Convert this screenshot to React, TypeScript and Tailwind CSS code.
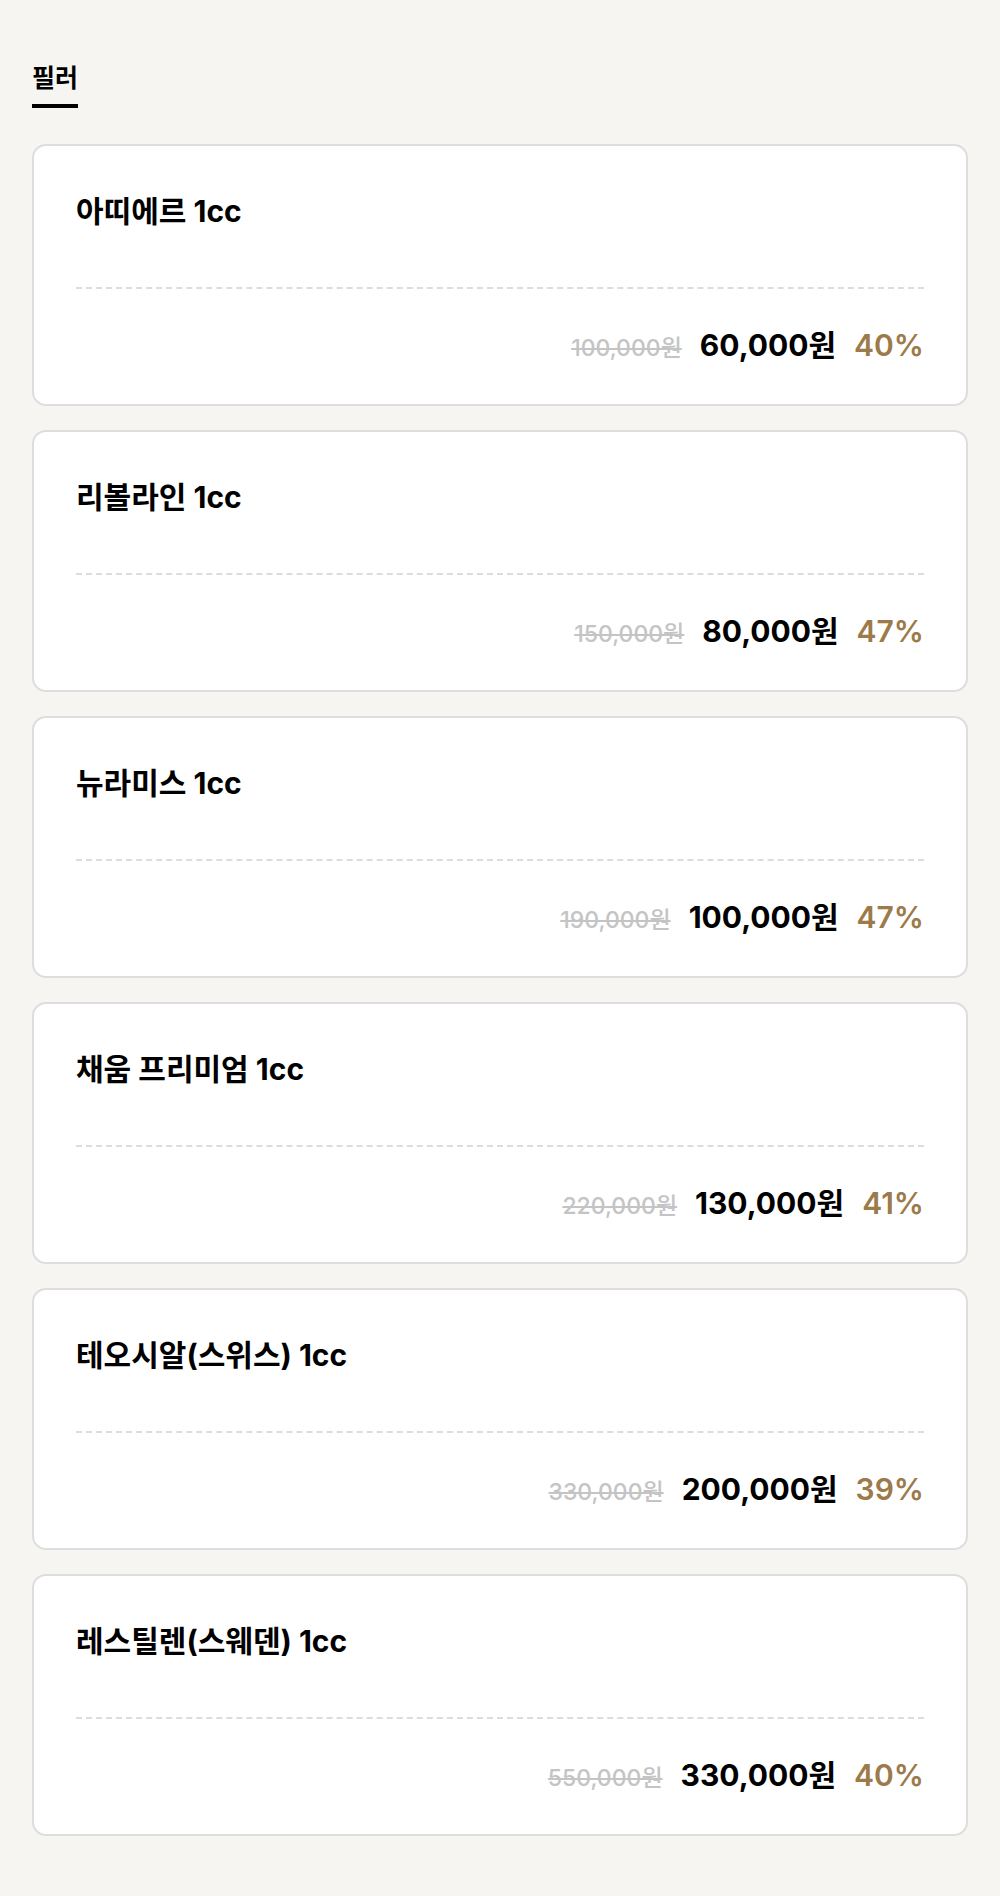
import React from "react";

const items = [
  { id: 1, name: "아띠에르 1cc", original: "100,000원", price: "60,000원", discount: "40%" },
  { id: 2, name: "리볼라인 1cc", original: "150,000원", price: "80,000원", discount: "47%" },
  { id: 3, name: "뉴라미스 1cc", original: "190,000원", price: "100,000원", discount: "47%" },
  { id: 4, name: "채움 프리미엄 1cc", original: "220,000원", price: "130,000원", discount: "41%" },
  { id: 5, name: "테오시알(스위스) 1cc", original: "330,000원", price: "200,000원", discount: "39%" },
  { id: 6, name: "레스틸렌(스웨덴) 1cc", original: "550,000원", price: "330,000원", discount: "40%" },
];

const App = () => {
  return (
    <div
      className="min-h-screen w-full bg-[#f6f5f1] px-8 pt-[60px] pb-[62px] text-black"
      style={{ fontFamily: 'Inter, "Noto Sans CJK KR", sans-serif' }}
    >
      {/* Tab */}
      <div className="flex">
        <div className="border-b-4 border-black pb-[8px] text-[25px] font-bold leading-[36px]">
          필러
        </div>
      </div>

      {/* Price list */}
      <div className="mt-[36px] flex flex-col gap-[24px]">
        {items.map((item) => (
          <div
            key={item.id}
            className="rounded-[14px] border-2 border-[#dddddd] bg-white px-[42px] pt-[45px] pb-[38px]"
          >
            <div className="text-[30px] font-bold leading-[40px]">{item.name}</div>
            <div className="mt-[56px] border-t-2 border-dashed border-[#dcdcdc]"></div>
            <div className="mt-[38px] flex items-baseline justify-end gap-[18px] leading-[36px]">
              <span className="text-[23px] font-medium text-[#c4c4c4] line-through">
                {item.original}
              </span>
              <span className="text-[30px] font-bold">{item.price}</span>
              <span className="text-[30px] font-semibold text-[#9c7a4a]">
                {item.discount}
              </span>
            </div>
          </div>
        ))}
      </div>
    </div>
  );
};

export default App;
